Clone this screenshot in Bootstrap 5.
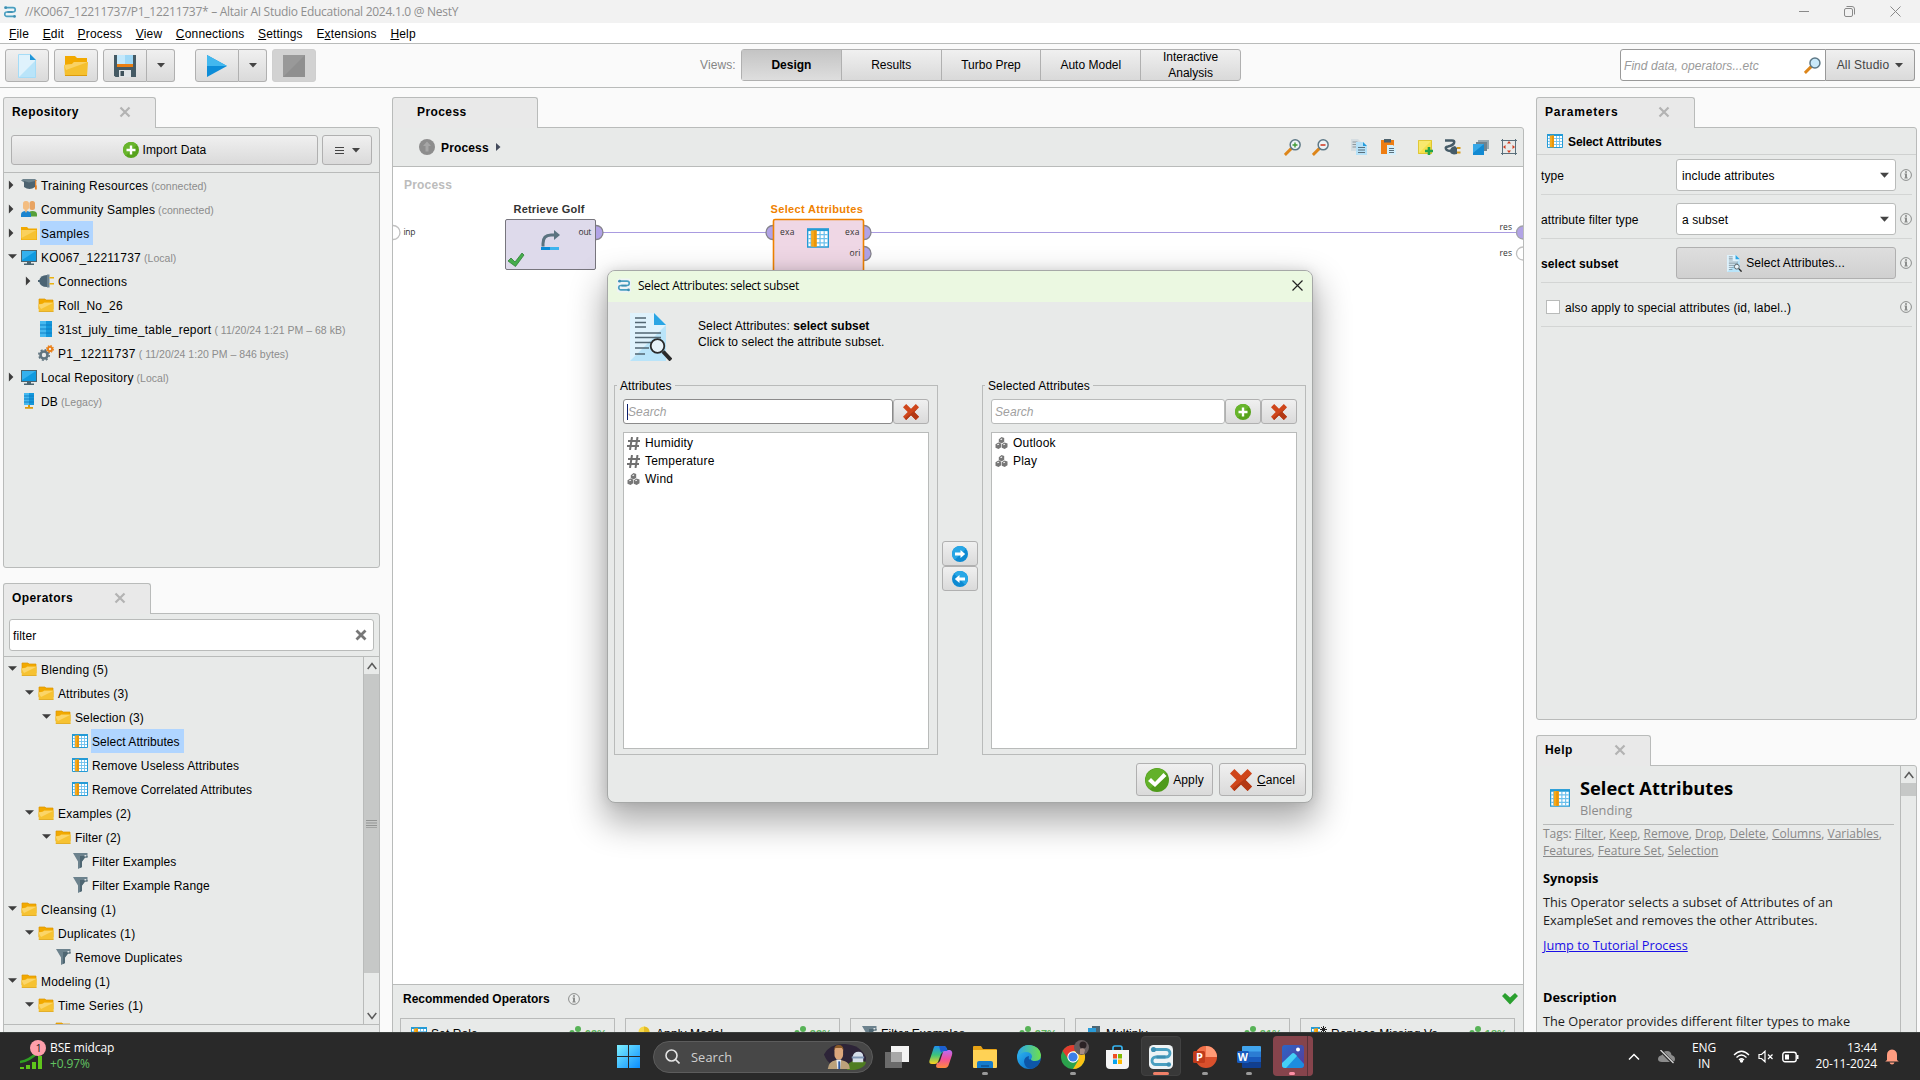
<!DOCTYPE html>
<html lang="en">
<head>
<meta charset="utf-8">
<title>Altair AI Studio</title>
<meta name="viewport" content="width=device-width, initial-scale=1">
<link href="https://cdn.jsdelivr.net/npm/bootstrap@5.3.0/dist/css/bootstrap.min.css" rel="stylesheet">
<style>
:root{--line:#b9bbba;--pane:#e8eae9}
html,body{height:1080px;overflow:hidden}
body{font-family:"Liberation Sans",Arial,sans-serif;font-size:12px;line-height:16px;color:#000;background:#fafafa;width:1920px;letter-spacing:.1px}
svg{display:block;flex:none}
.titlebar{height:23px;background:#f2f2f2;color:#8f8f8f;font-family:"Open Sans",sans-serif;padding:0 19px 0 3px;letter-spacing:-.28px}
.menubar{height:21px;background:#fff;border-bottom:1px solid var(--line);padding:1px 0 0 9px;gap:13.6px;letter-spacing:.17px}
.toolbar{height:44px;border-bottom:1px solid var(--line);padding:5px 5px 0}
.jbtn{display:flex;align-items:center;justify-content:center;border:1px solid #b0b0b0;border-radius:3px;background:linear-gradient(#f0f0f0,#dadada);color:#000}
.tb{height:33px;width:44px}
.tbgap{margin-left:5px}
.tb-off{background:#d2d2d2;border-color:#cfcfcf}
.tbdrop{width:28px;height:33px}
.joinl{border-top-right-radius:0;border-bottom-right-radius:0}
.joinr{border-top-left-radius:0;border-bottom-left-radius:0;border-left:0}
.views{width:500px;height:32px;border:1px solid #b0b0b0;border-radius:3px;background:linear-gradient(#f0f0f0,#d9d9d9);letter-spacing:0}
.views>div{flex:1;display:flex;align-items:center;justify-content:center;text-align:center;border-left:1px solid #b0b0b0}
.views>div:first-child{border-left:0;background:linear-gradient(#c4c4c4,#dedede)}
.finder{width:206px;height:32px;border:1px solid #999;border-radius:3px 0 0 3px;background:#fff;color:#9a9a9a;font-style:italic;padding:1px 4px 0 3px;letter-spacing:.05px}
.scope{width:89px;height:32px;border-color:#999;color:#444;letter-spacing:.2px}
.work{height:944px;padding:9px 3px 0;overflow:hidden}
.tabhead{height:31px;border:1px solid var(--line);border-bottom:0;border-radius:3px 3px 0 0;background:#e9e9e9;font-weight:700;padding:0 24px 2px 8px;letter-spacing:.42px;margin-bottom:-1px;position:relative;z-index:1}
.pane{background:var(--pane);border:1px solid var(--line);border-radius:0 3px 3px 3px}
.tree .trow{display:flex;align-items:center;height:24px}
.trow>svg:first-child{margin:0 4px 0 4px}
.trow>.leafgap{width:17px;flex:none}
.trow span.lbl{margin-left:3px;padding:2px 4px 0 1px;line-height:22px;letter-spacing:.12px;white-space:nowrap}
.trow span.sel{background:#b0d5ff}
.meta{font-size:10.5px;color:#8c8c8c;margin-left:-1px;letter-spacing:.02px;padding-top:2px;white-space:nowrap}
.l1{padding-left:17px}.l2{padding-left:34px}.l3{padding-left:51px}
.jinput{background:#fff;border:1px solid var(--line);border-radius:3px}
.sbar{width:16px;border-left:1px solid var(--line);flex:none}
.thumb{background:#c6c8c7}
.crumb{height:39px;border-bottom:1px solid var(--line);padding:0 6px 0 26px}
.canvas{height:817px;background:#fff}
.reco{width:215px;height:40px;border:1px solid var(--line);padding:7px 7px 0 10px;flex:none}
.reco .pct{color:#5cb35c;font-weight:700;font-size:11px}
.prow{height:44px;border-bottom:1px solid #d3d5d4;margin:0 4px;padding-top:5px}
.prow.first{height:40px;padding-top:1px}
.prow>span:first-child,.prow>b{padding-top:1px}
.prow>svg:last-child{margin-left:4px}
.combo{width:220px;height:32px;padding:1px 6px 0 5px}
.ckbox{width:14px;height:14px;border:1px solid var(--line);margin:0 5px}
.helpbody{font-family:"Open Sans",sans-serif;font-size:12.75px;letter-spacing:0;padding:13px 6px 0 6px;color:#1c1c1c;width:363px}
.helpbody h5{font-size:18.3px;line-height:24px;font-weight:700;margin:-3px 0 0;color:#000}
.tags{color:#888;font-size:12px;line-height:17px;border-top:1px solid var(--line);white-space:nowrap}
.helpbody h6{font-size:12.8px;line-height:18px;font-weight:700;color:#000;margin:0}
.helpbody p{line-height:18px;margin:6px 0 0;white-space:nowrap}
.dlg{position:absolute;left:607px;top:270px;width:706px;height:533px;background:var(--pane);border:1px solid #a6a8a7;border-radius:8px;box-shadow:0 16px 34px 4px rgba(0,0,0,.32),0 0 12px rgba(0,0,0,.1);overflow:hidden;z-index:5}
.dlgbar{height:31px;background:#ebf8e1;font-family:"Open Sans",sans-serif;padding:0 9px 2px 9px;letter-spacing:-.3px}
.grp{position:relative;width:324px;height:370px;border:1px solid var(--line);padding:13px 8px 6px}
.grp>.cap{position:absolute;left:2px;top:-8px;background:var(--pane);padding:0 3px}
.ph{font-style:italic;color:#a0a0a0}
.sq{width:36px;height:25px;margin-left:0}
.lst{background:#fff;border:1px solid var(--line);height:317px;margin-top:8px;padding:1px 3px;letter-spacing:.2px}
.lst>div{display:flex;align-items:center;height:18px;gap:5px}
.tbar{height:48px;background:#292929;color:#fff;font-family:"Open Sans",sans-serif;position:relative;z-index:6;border-top:1px solid #3b3f3d}
.slot{width:44px;height:47px;display:flex;align-items:center;justify-content:center;position:relative;flex:none}
.run::after{content:"";position:absolute;left:19px;bottom:5px;width:6px;height:3px;border-radius:2px;background:#9a9a9a}
.slot.act::before{content:"";position:absolute;left:2px;top:3px;width:40px;height:40px;border-radius:4px;background:#383838;border:1px solid #414141}
.slot.act::after{left:14px;width:16px;background:#f08068}
.slot.att::before{content:"";position:absolute;left:2px;top:3px;width:40px;height:40px;border-radius:4px;background:linear-gradient(90deg,#86444c 34px,#5a3238 34px,#5a3238 35px,#86444c 35px)}
.slot.att::after{left:18px;background:#ff8fa5}
.slot svg{position:relative}
.pill{width:220px;height:32px;border-radius:16px;background:#474747;border:1px solid #5c5c5c;color:#cfcfcf;padding:0 4px 0 11px}
.tray{font-size:12px;line-height:16px;letter-spacing:-.12px}
.lift{padding-bottom:1px}
</style>
</head>
<body>
<svg width="0" height="0" class="position-absolute">
<defs>
<linearGradient id="gb" x1="0" y1="0" x2="1" y2="1"><stop offset="0" stop-color="#7df0ff"/><stop offset="1" stop-color="#0a8cff"/></linearGradient>
<linearGradient id="ge" x1="0" y1="0" x2="1" y2="1"><stop offset="0" stop-color="#35c3f0"/><stop offset=".5" stop-color="#1a8fe0"/><stop offset="1" stop-color="#0c5aa8"/></linearGradient>
<linearGradient id="ge2" x1="0" y1="0" x2="1" y2="0"><stop offset="0" stop-color="#2aa7ee"/><stop offset="1" stop-color="#6fe04a"/></linearGradient>
<linearGradient id="gp" x1="0" y1="0" x2="1" y2="1"><stop offset="0" stop-color="#2a66c8"/><stop offset="1" stop-color="#5a3a98"/></linearGradient>
<linearGradient id="c1" x1="0" y1="0" x2="0" y2="1"><stop offset="0" stop-color="#1f8ff0"/><stop offset=".5" stop-color="#3cc47a"/><stop offset="1" stop-color="#ffd21e"/></linearGradient>
<linearGradient id="c2" x1="0" y1="0" x2="0" y2="1"><stop offset="0" stop-color="#b86cf5"/><stop offset=".5" stop-color="#f0509a"/><stop offset="1" stop-color="#ff8a3c"/></linearGradient>
</defs>
<symbol id="i-logo" viewBox="0 0 16 16"><rect x="0" y="0" width="16" height="16" rx="3" fill="#eef3f5"/><path d="M3 3h8.500a2.500 2.500 0 0 1 0 5H4.500a2.400 2.400 0 0 0 0 5H13" fill="none" stroke="#4a9fc0" stroke-width="1.900"/><circle cx="3" cy="3" r="1.700" fill="#3d8fb2"/><circle cx="13.200" cy="13" r="1.500" fill="#3d8fb2"/><path d="M5 8h6" stroke="#3d8fb2" stroke-width="2"/></symbol>
<symbol id="i-open" viewBox="0 0 16 16"><path d="M1 2h6l1 1h7v9H1z" fill="#f2a900" stroke="#dd9600" stroke-width=".7"/><path d="M.4 7.500 5 6.500l1-1h9.600v9H.8z" fill="#f6c232"/><path d="M.4 7.600 5 6.800l1-1h9.500L3 12z" fill="#fbd568"/><path d="M.8 14.500h14.700" stroke="#dfa410" stroke-width=".8"/></symbol>
<symbol id="i-fold" viewBox="0 0 16 16"><path d="M0 2h6l1.500 1.500H16V15H0z" fill="#f2a900"/><path d="M.5 5h15v9.500H.5z" fill="#f6c232"/><path d="M.5 5h15L.5 13z" fill="#fad15c"/></symbol>
<symbol id="i-mon" viewBox="0 0 16 16"><path d="M0 1h16v12H0z" fill="#4b6470"/><path d="M1 2h14v10H1z" fill="#0f9ae0"/><path d="M1 2h14L1 11z" fill="#35b1ee"/><path d="M6 13h4v1.500h3V16H3v-1.500h3z" fill="#4b6470"/></symbol>
<symbol id="i-cap" viewBox="0 0 16 16"><path d="M0 3.500 2 2h12l2 1.500L12 6H4z" fill="#6e838d"/><path d="M3 4l5 1.500L14 4v6q-5.500 4-11 0z" fill="#4d6370"/><path d="M14.700 3v6" stroke="#e67e22" stroke-width="1.200"/><path d="M14 8.500h1.800v4H14z" fill="#e67e22"/></symbol>
<symbol id="i-ppl" viewBox="0 0 16 16"><rect x="8.500" y="0" width="5.500" height="9" rx="2.500" fill="#e8a462"/><rect x="2" y="0" width="6" height="9" rx="2.700" fill="#f3bd80"/><path d="M7.500 15.500V13q0-3 4-3t4.500 3v2.500z" fill="#57a03a"/><path d="M0 16v-2.500Q0 10 5 10t5 3.500V16z" fill="#1a84cf"/><path d="M3.500 9h3L5 12z" fill="#f3bd80"/></symbol>
<symbol id="i-plug" viewBox="0 0 16 16"><path d="M0 7h2v2H0z" fill="#4d6370"/><path d="M1 8q1-6 8-6v12q-7 0-8-6z" fill="#4b6474"/><path d="M9 1.500h2.500v13H9z" fill="#6e8491"/><path d="M11.500 4H16v1.600h-4.500zM11.500 10H16v1.600h-4.500z" fill="#eab10f"/></symbol>
<symbol id="i-data" viewBox="0 0 16 16"><path d="M2 0h12v16H2z" fill="#1498dc"/><path d="M2 0h6v16H2z" fill="#45b9f0"/><path d="M2 4h12M2 8h12M2 12h12" stroke="#0c7cc0" stroke-width=".9"/></symbol>
<symbol id="i-db" viewBox="0 0 16 16"><path d="M3 0h10v12H3z" fill="#1498dc"/><path d="M3 0h5v12H3z" fill="#45b9f0"/><path d="M3 3h10M3 6h10M3 9h10" stroke="#0c7cc0" stroke-width=".9"/><path d="M7 12h2v2H7zM4 14h8v1.800H4z" fill="#d99a10"/></symbol>
<symbol id="i-gear" viewBox="0 0 16 16"><circle cx="6" cy="10" r="3.500" fill="none" stroke="#60747f" stroke-width="2.600"/><circle cx="6" cy="10" r="5.200" fill="none" stroke="#60747f" stroke-width="1.600" stroke-dasharray="2 2.080"/><circle cx="12" cy="4" r="2.100" fill="none" stroke="#ea7d13" stroke-width="1.800"/><circle cx="12" cy="4" r="3.300" fill="none" stroke="#ea7d13" stroke-width="1.300" stroke-dasharray="1.500 1.090"/></symbol>
<symbol id="i-tbl" viewBox="0 0 16 16"><path d="M.5 1.500h15v13H.5z" fill="#fff" stroke="#249bd6"/><path d="M1 5.500h14M1 8.500h14M1 11.500h14M9.500 3v11M12.500 3v11M3 3v11" stroke="#6cc0ec" stroke-width=".9"/><path d="M0 1h16v2H0z" fill="#249bd6"/><path d="M3 2.500h4v11.800H3z" fill="#f6a91b"/><path d="M5 2.500h2v11.800H5z" fill="#ea960a"/></symbol>
<symbol id="i-fun" viewBox="0 0 16 16"><path d="M1 0h14.500v4.500H13L10 8.500V14L6 16V8.500z" fill="#6c828d"/><path d="M8 3h7.500v1.500H13L10 8.500V14l-2 1z" fill="#4e6672"/><path d="M12.500 2h1.800v1.500h-1.800z" fill="#dfe4e6"/></symbol>
<symbol id="i-plus" viewBox="0 0 16 16"><circle cx="8" cy="8" r="8" fill="#57a31c"/><path d="M0 8a8 8 0 0 1 14-5.300L2.700 14A8 8 0 0 1 0 8z" fill="#68b52c"/><path d="M6.800 3.500h2.400v3.300h3.300v2.400H9.200v3.300H6.800V9.200H3.500V6.800h3.300z" fill="#fff"/></symbol>
<symbol id="i-redx" viewBox="0 0 16 16"><path d="M0 3.200 3.200 0 8 4.700 12.800 0 16 3.200 11.300 8l4.700 4.800-3.200 3.200L8 11.300 3.200 16 0 12.800 4.700 8z" fill="#cf461b"/><path d="M16 3.200 11.300 8l4.700 4.800-3.200 3.200L8 11.300 3.200 16 1.600 14.400z" fill="#b33915"/></symbol>
<symbol id="i-ok" viewBox="0 0 24 24"><circle cx="12" cy="12" r="12" fill="#4f9a1b"/><path d="M.5 12A11.500 11.500 0 0 1 21 5L5 21A11 11 0 0 1 .5 12z" fill="#63b12a"/><path d="M3 13l3-3 4 4L18.500 5l3 3L10 19z" fill="#fff"/></symbol>
<symbol id="i-info" viewBox="0 0 12 12"><circle cx="6" cy="6" r="5.400" fill="#eceeed" stroke="#8b8d8c"/><path d="M5 2.300h2v1.400H5zM4.500 4.600H7v3.900h.7v1H4.400v-1H5V5.600h-.5z" fill="#8b8d8c"/></symbol>
<symbol id="i-x" viewBox="0 0 12 12"><path d="M1.500 1.500l9 9m0-9l-9 9" stroke="#b3b3b3" stroke-width="2.200"/></symbol>
<symbol id="i-dn" viewBox="0 0 10 6"><path d="M0 0h10L5 5.600z" fill="#444"/></symbol>
<symbol id="i-rt" viewBox="0 0 10 10"><path d="M1 0v10l5-5z" fill="#3d3d3d"/></symbol>
<symbol id="i-do" viewBox="0 0 10 10"><path d="M0 2h10L5 7z" fill="#3d3d3d"/></symbol>
<symbol id="i-up" viewBox="0 0 10 8"><path d="M.7 7 5 1.500 9.300 7" fill="none" stroke="#5a5a5a" stroke-width="1.500"/></symbol>
<symbol id="i-mag" viewBox="0 0 16 16"><path d="M.8 15 7 8.800" stroke="#dd861a" stroke-width="2.800"/><circle cx="10.300" cy="5.700" r="4.700" fill="#c9e9fa" stroke="#5d7886" stroke-width="1.400"/></symbol>
<symbol id="i-zoom" viewBox="0 0 16 16"><path d="M.8 15 7 8.800" stroke="#dd861a" stroke-width="2.800"/><circle cx="10.500" cy="5.500" r="4.700" fill="#edf4f7" stroke="#5d7886" stroke-width="1.400"/></symbol>
<symbol id="i-docmag" viewBox="0 0 42 48"><path d="M0 0h24l12 12v36H0z" fill="#b9e4f9"/><path d="M0 0h24l12 12L0 48z" fill="#dff2fc"/><path d="M24 0v12h12z" fill="#2aa5e4"/><path d="M5 5h11M5 9.500h11M5 14h11M5 20h26M5 24.500h26M5 29.500h16M5 35h14M5 41h10" stroke="#526672" stroke-width="1.500"/><circle cx="27.500" cy="33" r="6.800" fill="#eef5f8" fill-opacity=".85" stroke="#2a2a2a" stroke-width="1.800"/><path d="M33 38.500l8 8.500" stroke="#2a2a2a" stroke-width="4"/></symbol>
<symbol id="i-hash" viewBox="0 0 13 13"><path d="M5 0 3 13M10.500 0l-2 13M1 4h12M0 9h12" stroke="#707070" stroke-width="2"/></symbol>
<symbol id="i-nom" viewBox="0 0 12 12"><path d="M3.300 2.300 6 0l2.700 1v4L6.200 6.200 3.300 5.200z" fill="#777"/><path d="M0 7.300 2.800 5.500l2.900 1v3.700L3 12 0 10.800zM6.300 7.300 9 5.500l3 1v3.700L9.200 12l-2.900-1.200z" fill="#777"/><path d="M4.500 2.800 6 1.600l1 .4-1.200 1zM1.300 7.800 3 6.800l.8.400-1.400 1zM7.400 7.800 9 6.800l.8.400-1.400 1z" fill="#fff"/></symbol>
<symbol id="i-arr" viewBox="0 0 16 16"><circle cx="8" cy="8" r="8" fill="#0d8ad2"/><path d="M0 8a8 8 0 0 1 14-5.300L2.700 14A8 8 0 0 1 0 8z" fill="#28a7e6"/><path d="M3 6.500h5.500V4l4.700 4-4.700 4V9.500H3z" fill="#fff"/></symbol>
<symbol id="i-dots" viewBox="0 0 12 12"><circle cx="9" cy="3" r="3" fill="#57b357"/><circle cx="3" cy="6.500" r="2.600" fill="#57b357"/><path d="M0 10h6v2H0zM6 8q3-3 6 0v4H6z" fill="#57b357"/></symbol>
</svg>

<div class="titlebar d-flex align-items-center">
  <svg width="14" height="14"><use href="#i-logo"/></svg>
  <span class="ms-2">//KO067_12211737/P1_12211737* – Altair AI Studio Educational 2024.1.0 @ NestY</span>
  <div class="ms-auto d-flex align-items-center lift" style="gap:35px">
    <svg width="10" height="10"><path d="M0 5.500h10" stroke="#8a8a8a"/></svg>
    <svg width="11" height="11" fill="none" stroke="#8a8a8a"><rect x=".5" y="2.500" width="8" height="8" rx="1.500"/><path d="M2.500.5H8q2.500 0 2.500 2.500v5.500"/></svg>
    <svg width="11" height="11"><path d="M.5.5l10 10m0-10l-10 10" stroke="#8a8a8a"/></svg>
  </div>
</div>
<div class="menubar d-flex align-items-center">
  <span><u>F</u>ile</span><span><u>E</u>dit</span><span><u>P</u>rocess</span><span><u>V</u>iew</span><span><u>C</u>onnections</span><span><u>S</u>ettings</span><span>E<u>x</u>tensions</span><span><u>H</u>elp</span>
</div>
<div class="toolbar d-flex align-items-start">
  <div class="jbtn tb"><svg width="18" height="24"><path d="M0 0h12l6 6v18H0z" fill="#b9e4f9"/><path d="M0 0h12l6 6L0 24z" fill="#dff2fc"/><path d="M12 0l6 6h-6z" fill="#2196d8"/><path d="M.5.5H12M.5.5v23h17V6" fill="none" stroke="#a5dcf7"/></svg></div>
  <div class="jbtn tb tbgap"><svg width="24" height="22"><path d="M1 1h10l2 2h10v17H1z" fill="#f2a900"/><path d="M0 10l8-1 2-2h14l-1 14H1z" fill="#f5c02e"/><path d="M0 10l8-1 2-2h14L2 15z" fill="#fad263"/><path d="M1 20.500h22" stroke="#dc9b0c"/></svg></div>
  <div class="d-flex tbgap">
    <div class="jbtn tb joinl"><svg width="22" height="22"><path d="M0 0h22v22H1.500L0 20.500z" fill="#455a64"/><path d="M3 0h16v9H3z" fill="#c3e8fb"/><path d="M11 0h8v9h-8z" fill="#9fd8f6"/><path d="M3 9h16v3H3z" fill="#ea7f13"/><path d="M5 15h12v7H5z" fill="#dfe4e7"/><path d="M6.500 16H10v5H6.500z" fill="#3d515b"/></svg></div>
    <div class="jbtn joinr tbdrop"><svg width="8" height="5"><use href="#i-dn"/></svg></div>
  </div>
  <div class="d-flex" style="margin-left:20px">
    <div class="jbtn tb joinl"><svg width="20" height="22"><path d="M0 0l20 11L0 22z" fill="#0d8dd8"/><path d="M0 0l20 11H0z" fill="#43b8ee"/></svg></div>
    <div class="jbtn joinr tbdrop"><svg width="8" height="5"><use href="#i-dn"/></svg></div>
  </div>
  <div class="jbtn tb tb-off tbgap"><svg width="22" height="22"><path d="M0 0h22v22H0z" fill="#8f8f8f"/><path d="M0 0h22L0 22z" fill="#999"/></svg></div>
  <div class="d-flex align-items-center" style="margin-left:384px"><span style="color:#858585;width:41px">Views:</span>
    <div class="views d-flex"><div class="fw-bold">Design</div><div>Results</div><div>Turbo Prep</div><div>Auto Model</div><div>Interactive<br>Analysis</div></div>
  </div>
  <div class="d-flex ms-auto">
    <div class="finder d-flex align-items-center justify-content-between"><span>Find data, operators...etc</span><svg width="17" height="17"><use href="#i-mag"/></svg></div>
    <div class="jbtn scope joinr">All Studio<svg style="margin-left:6px" width="8" height="5"><use href="#i-dn"/></svg></div>
  </div>
</div>

<div class="work d-flex">
  <!-- Left column -->
  <div class="flex-shrink-0" style="width:377px">
    <div class="tabhead d-flex align-items-center justify-content-between" style="width:153px">Repository<svg width="12" height="12"><use href="#i-x"/></svg></div>
    <div class="pane" style="height:441px">
      <div class="d-flex" style="padding:7px 7px 0;gap:4px;height:45px;border-bottom:1px solid var(--line)">
        <div class="jbtn flex-fill" style="height:30px;gap:4px"><svg width="16" height="16"><use href="#i-plus"/></svg>Import Data</div>
        <div class="jbtn" style="width:50px;height:30px;gap:8px"><svg width="9" height="9"><path d="M0 1.500h9M0 4.500h9M0 7.500h9" stroke="#444"/></svg><svg width="8" height="5"><use href="#i-dn"/></svg></div>
      </div>
      <div class="tree">
        <div class="trow"><svg width="9" height="10"><use href="#i-rt"/></svg><svg width="16" height="16"><use href="#i-cap"/></svg><span class="lbl" style="letter-spacing:.2px">Training Resources</span><span class="meta">(connected)</span></div>
        <div class="trow"><svg width="9" height="10"><use href="#i-rt"/></svg><svg width="16" height="16"><use href="#i-ppl"/></svg><span class="lbl" style="letter-spacing:.2px">Community Samples</span><span class="meta">(connected)</span></div>
        <div class="trow"><svg width="9" height="10"><use href="#i-rt"/></svg><svg width="16" height="16"><use href="#i-fold"/></svg><span class="lbl sel" style="letter-spacing:.25px">Samples</span></div>
        <div class="trow"><svg width="9" height="10"><use href="#i-do"/></svg><svg width="16" height="16"><use href="#i-mon"/></svg><span class="lbl" style="letter-spacing:.25px">KO067_12211737</span><span class="meta">(Local)</span></div>
        <div class="trow l1"><svg width="9" height="10"><use href="#i-rt"/></svg><svg width="16" height="16"><use href="#i-plug"/></svg><span class="lbl" style="letter-spacing:.22px">Connections</span></div>
        <div class="trow l1"><i class="leafgap"></i><svg width="16" height="16"><use href="#i-open"/></svg><span class="lbl" style="letter-spacing:.22px">Roll_No_26</span></div>
        <div class="trow l1"><i class="leafgap"></i><svg width="16" height="16"><use href="#i-data"/></svg><span class="lbl" style="letter-spacing:.22px">31st_july_time_table_report</span><span class="meta">( 11/20/24 1:21 PM – 68 kB)</span></div>
        <div class="trow l1"><i class="leafgap"></i><svg width="16" height="16"><use href="#i-gear"/></svg><span class="lbl" style="letter-spacing:.35px">P1_12211737</span><span class="meta">( 11/20/24 1:20 PM – 846 bytes)</span></div>
        <div class="trow"><svg width="9" height="10"><use href="#i-rt"/></svg><svg width="16" height="16"><use href="#i-mon"/></svg><span class="lbl" style="letter-spacing:.2px">Local Repository</span><span class="meta">(Local)</span></div>
        <div class="trow"><i class="leafgap"></i><svg width="16" height="16"><use href="#i-db"/></svg><span class="lbl">DB</span><span class="meta">(Legacy)</span></div>
      </div>
    </div>
    <div class="tabhead d-flex align-items-center justify-content-between" style="width:148px;margin-top:15px">Operators<svg width="12" height="12"><use href="#i-x"/></svg></div>
    <div class="pane" style="height:440px">
      <div style="height:43px;padding:5px 5px 0 5px;border-bottom:1px solid var(--line)">
        <div class="jinput d-flex align-items-center justify-content-between" style="height:32px;padding:0 6px 0 3px"><span style="padding-top:1px">filter</span><svg width="12" height="12"><path d="M1.500 1.500l9 9m0-9l-9 9" stroke="#777" stroke-width="2.800"/></svg></div>
      </div>
      <div class="d-flex" style="height:368px;border-bottom:1px solid var(--line)">
        <div class="tree flex-fill overflow-hidden">
          <div class="trow"><svg width="9" height="10"><use href="#i-do"/></svg><svg width="16" height="16"><use href="#i-open"/></svg><span class="lbl" style="letter-spacing:.2px">Blending (5)</span></div>
          <div class="trow l1"><svg width="9" height="10"><use href="#i-do"/></svg><svg width="16" height="16"><use href="#i-open"/></svg><span class="lbl">Attributes (3)</span></div>
          <div class="trow l2"><svg width="9" height="10"><use href="#i-do"/></svg><svg width="16" height="16"><use href="#i-open"/></svg><span class="lbl">Selection (3)</span></div>
          <div class="trow l3"><i class="leafgap"></i><svg width="16" height="16"><use href="#i-tbl"/></svg><span class="lbl sel" style="letter-spacing:.05px">Select Attributes</span></div>
          <div class="trow l3"><i class="leafgap"></i><svg width="16" height="16"><use href="#i-tbl"/></svg><span class="lbl">Remove Useless Attributes</span></div>
          <div class="trow l3"><i class="leafgap"></i><svg width="16" height="16"><use href="#i-tbl"/></svg><span class="lbl" style="letter-spacing:.1px">Remove Correlated Attributes</span></div>
          <div class="trow l1"><svg width="9" height="10"><use href="#i-do"/></svg><svg width="16" height="16"><use href="#i-open"/></svg><span class="lbl" style="letter-spacing:.2px">Examples (2)</span></div>
          <div class="trow l2"><svg width="9" height="10"><use href="#i-do"/></svg><svg width="16" height="16"><use href="#i-open"/></svg><span class="lbl">Filter (2)</span></div>
          <div class="trow l3"><i class="leafgap"></i><svg width="16" height="16"><use href="#i-fun"/></svg><span class="lbl">Filter Examples</span></div>
          <div class="trow l3"><i class="leafgap"></i><svg width="16" height="16"><use href="#i-fun"/></svg><span class="lbl">Filter Example Range</span></div>
          <div class="trow"><svg width="9" height="10"><use href="#i-do"/></svg><svg width="16" height="16"><use href="#i-open"/></svg><span class="lbl" style="letter-spacing:.3px">Cleansing (1)</span></div>
          <div class="trow l1"><svg width="9" height="10"><use href="#i-do"/></svg><svg width="16" height="16"><use href="#i-open"/></svg><span class="lbl" style="letter-spacing:.25px">Duplicates (1)</span></div>
          <div class="trow l2"><i class="leafgap"></i><svg width="16" height="16"><use href="#i-fun"/></svg><span class="lbl" style="letter-spacing:.2px">Remove Duplicates</span></div>
          <div class="trow"><svg width="9" height="10"><use href="#i-do"/></svg><svg width="16" height="16"><use href="#i-open"/></svg><span class="lbl" style="letter-spacing:.2px">Modeling (1)</span></div>
          <div class="trow l1"><svg width="9" height="10"><use href="#i-do"/></svg><svg width="16" height="16"><use href="#i-open"/></svg><span class="lbl" style="letter-spacing:.25px">Time Series (1)</span></div>
          <div class="trow l2"><i class="leafgap"></i><svg width="16" height="16"><use href="#i-open"/></svg></div>
        </div>
        <div class="sbar d-flex flex-column align-items-center">
          <div style="height:17px;padding-top:5px"><svg width="10" height="8"><use href="#i-up"/></svg></div>
          <div class="thumb w-100 d-flex align-items-center justify-content-center" style="height:299px"><svg width="11" height="8"><path d="M0 .5h11M0 3h11M0 5.500h11M0 7.800h11" stroke="#939594"/></svg></div>
          <div class="mt-auto pb-1"><svg width="10" height="8" style="transform:scaleY(-1)"><use href="#i-up"/></svg></div>
        </div>
      </div>
    </div>
  </div>

  <!-- Process editor -->
  <div class="flex-shrink-0" style="width:1132px;margin-left:12px">
    <div class="tabhead d-flex align-items-center" style="width:146px;padding-left:24px">Process</div>
    <div class="pane" style="height:940px">
      <div class="crumb d-flex align-items-center">
        <svg width="16" height="16"><circle cx="8" cy="8" r="8" fill="#8d8d8d"/><path d="M8 2.500l4 4.500H9.500v5.500h-3V7H4z" fill="#a6a6a6"/></svg>
        <b style="letter-spacing:.15px;padding:1px 0 0 6px">Process</b>
        <svg style="margin-left:7px" width="5" height="8"><path d="M0 0v8l4.500-4z" fill="#444b5c"/></svg>
        <div class="ms-auto d-flex align-items-center">
          <svg width="17" height="17"><use href="#i-zoom"/><path d="M11 3.500v5M8.500 6h5" stroke="#3f9a35" stroke-width="1.400"/></svg>
          <svg width="17" height="17" style="margin-left:11px"><use href="#i-zoom"/><path d="M8.500 6h5" stroke="#d0402a" stroke-width="1.600"/></svg>
          <svg width="17" height="16" style="margin-left:22px"><path d="M0 0h7l3 3v9H0z" fill="#d5dde1"/><path d="M1.500 3h5M1.500 5.500h6M1.500 8h6" stroke="#8a979e"/><path d="M5 3h7l4 4v9H5z" fill="#b5e1f8"/><path d="M12 3l4 4h-4z" fill="#269cdc"/><path d="M7 8.500h7M7 11h7M7 13.500h7" stroke="#5a6f7b"/></svg>
          <svg width="15" height="16" style="margin-left:13px"><path d="M0 1h13v14H0z" fill="#ee7d12"/><path d="M3 0h7v3.500H3z" fill="#4c616c"/><path d="M6 6h6l3 3v7H6z" fill="#d3effc"/><path d="M8 9.500h5M8 11.500h5M8 13.500h5" stroke="#5a6f7b"/></svg>
          <svg width="16" height="16" style="margin-left:22px"><path d="M0 1h14v14H0z" fill="#f5e04a"/><path d="M0 1h14L0 15z" fill="#f9e96e"/><path d="M.5 1.500h13v13H.5z" fill="none" stroke="#d9bf2b" stroke-width=".8"/><path d="M11 8v8M7 12h8" stroke="#22a447" stroke-width="2.600"/></svg>
          <svg width="17" height="16" style="margin-left:10px"><path d="M1 1.500h7q3 0 2 2.500T4 7.500Q1 8 2 10t5 2" fill="none" stroke="#465c68" stroke-width="2.500"/><path d="M6 12q0-4 5-5l2 2v6l-3 .5Q6 15 6 12z" fill="#465c68"/><path d="M13 9h3.500M13 13.500h3.500" stroke="#d79a18" stroke-width="1.800"/></svg>
          <svg width="16" height="15" style="margin-left:12px"><path d="M5 0h11v9H5z" fill="#99a8b0"/><path d="M3 2h11v9H3z" fill="#6f838e"/><path d="M0 4h11v11H0z" fill="#128ad2"/><path d="M0 4h11L0 13z" fill="#36a8e8"/></svg>
          <svg width="16" height="16" style="margin-left:12px"><path d="M1.500 0v16M14.500 0v16M0 1.500h16M0 14.500h16" stroke="#5a6f7b"/><path d="M8 2l2 2.500H6zM8 14l2-2.500H6zM2 8l2.500-2v4zM14 8l-2.500-2v4z" fill="#cf3b1e"/></svg>
        </div>
      </div>
      <svg class="canvas" width="1130" height="817" viewBox="393 167 1130 817">
        <text x="404" y="188.500" font-size="12" font-weight="700" fill="#bcbcbc" textLength="48">Process</text>
        <g font-family="Liberation Sans" font-size="11" font-weight="700">
          <text x="513.500" y="213" fill="#333" textLength="71">Retrieve Golf</text>
          <text x="770.500" y="213" fill="#ef8200" textLength="92.500">Select Attributes</text>
        </g>
        <path d="M603 232.500h163M870 232.500h647" stroke="#a99be0" stroke-width="1.200"/>
        <g stroke="#85838c" stroke-width="1.300">
          <circle cx="393" cy="232.500" r="7" fill="#fff" stroke="#c0c0c0"/>
          <circle cx="596" cy="232.500" r="7" fill="#b1a3e6"/>
          <circle cx="773" cy="232.500" r="7" fill="#b1a3e6"/>
          <circle cx="864" cy="232.500" r="7" fill="#b1a3e6"/>
          <circle cx="864" cy="253.500" r="7" fill="#b1a3e6"/>
          <circle cx="1523" cy="232.500" r="6.500" fill="#b1a3e6" stroke="#a0a0a8"/>
          <circle cx="1523" cy="253.500" r="6.500" fill="#fff" stroke="#c0c0c0"/>
        </g>
        <rect x="505.500" y="219.500" width="90" height="50" rx="1.500" fill="#dedaeb" stroke="#77757d"/>
        <rect x="773.500" y="219.500" width="90" height="60" rx="1.500" fill="#efd7e5" stroke="#ef8200" stroke-width="1.600"/>
        <g font-family="Open Sans" font-size="8.500" fill="#333">
          <text x="403.500" y="235" textLength="12">inp</text><text x="578.500" y="235" textLength="13">out</text>
          <text x="780" y="235" textLength="14.500">exa</text><text x="845" y="235" textLength="14.500">exa</text><text x="849.500" y="256">ori</text>
          <text x="1499.500" y="230">res</text><text x="1499.500" y="256">res</text>
        </g>
        <path d="M543 246.500v-3q0-8.500 8-8.500h5" fill="none" stroke="#5b7380" stroke-width="3"/><path d="M554 230l6 5-6 5z" fill="#5b7380"/><path d="M541 247h9v3h-9z" fill="#0c8bd6"/><path d="M550 247h9v3h-9z" fill="#3fb4ee"/>
        <path d="M508 261l3-3 4 4 7-9 2 2-8.500 11.500z" fill="#46ad4c" stroke="#2f8037" stroke-width=".8"/>
        <use href="#i-tbl" x="807" y="226" width="22" height="24"/>
      </svg>
      <div style="border-top:1px solid var(--line);height:100px">
        <div class="d-flex align-items-center" style="height:33px;padding:0 5px 6px 10px"><b style="letter-spacing:0">Recommended Operators</b><svg width="12" height="12" style="margin-left:18px"><use href="#i-info"/></svg>
          <svg class="ms-auto" width="16" height="12"><path d="M0 3l3-3 5 4.500L13 0l3 3-8 8.500z" fill="#2aa02f"/></svg></div>
        <div class="d-flex" style="padding-left:7px;gap:10px">
          <div class="reco d-flex"><svg width="16" height="16"><use href="#i-tbl"/></svg><span class="ms-1">Set Role</span><svg class="ms-auto" width="12" height="12"><use href="#i-dots"/></svg><span class="pct ms-1">62%</span></div>
          <div class="reco d-flex"><svg width="16" height="16"><circle cx="8" cy="6" r="5.500" fill="#f7d94c"/><path d="M8 .5a5.500 5.500 0 0 1 0 11z" fill="#e5bd25"/></svg><span class="ms-1">Apply Model</span><svg class="ms-auto" width="12" height="12"><use href="#i-dots"/></svg><span class="pct ms-1">33%</span></div>
          <div class="reco d-flex"><svg width="16" height="16"><use href="#i-fun"/></svg><span class="ms-1">Filter Examples</span><svg class="ms-auto" width="12" height="12"><use href="#i-dots"/></svg><span class="pct ms-1">27%</span></div>
          <div class="reco d-flex"><svg width="16" height="16"><path d="M6 0h8v8H6z" fill="#4d6674"/><path d="M2 2h8v8H2z" fill="#2a9bd8"/></svg><span class="ms-1">Multiply</span><svg class="ms-auto" width="12" height="12"><use href="#i-dots"/></svg><span class="pct ms-1">21%</span></div>
          <div class="reco d-flex"><svg width="16" height="16"><use href="#i-tbl"/><path d="M9 0h7v7H9z" fill="#e8eae9"/><path d="M12.500 0v7M9 3.500h7M10 1l5 5M15 1l-5 5" stroke="#222"/></svg><span class="ms-1">Replace Missing Va...</span><svg class="ms-auto" width="12" height="12"><use href="#i-dots"/></svg><span class="pct ms-1">18%</span></div>
        </div>
      </div>
    </div>
  </div>

  <!-- Right column -->
  <div class="flex-shrink-0" style="width:381px;margin-left:12px">
    <div class="tabhead d-flex align-items-center justify-content-between" style="width:159px;letter-spacing:.8px">Parameters<svg width="12" height="12"><use href="#i-x"/></svg></div>
    <div class="pane" style="height:593px">
      <div class="d-flex align-items-center" style="height:27px;padding-left:10px;border-bottom:1px solid #cfd1d0"><svg width="16" height="16"><use href="#i-tbl"/></svg><b style="letter-spacing:-.08px;padding:1px 0 0 5px">Select Attributes</b></div>
      <div class="prow first d-flex align-items-center"><span>type</span><div class="jinput combo ms-auto d-flex align-items-center justify-content-between">include attributes<svg width="9" height="7"><use href="#i-dn"/></svg></div><svg width="12" height="12"><use href="#i-info"/></svg></div>
      <div class="prow d-flex align-items-center"><span>attribute filter type</span><div class="jinput combo ms-auto d-flex align-items-center justify-content-between">a subset<svg width="9" height="7"><use href="#i-dn"/></svg></div><svg width="12" height="12"><use href="#i-info"/></svg></div>
      <div class="prow d-flex align-items-center"><b>select subset</b><div class="jbtn combo ms-auto" style="padding:0;background:linear-gradient(#dedede,#d0d0d0)"><svg width="15" height="17" class="me-1"><use href="#i-docmag"/></svg>Select Attributes...</div><svg width="12" height="12"><use href="#i-info"/></svg></div>
      <div class="prow d-flex align-items-center"><i class="bg-white ckbox"></i><span style="letter-spacing:.13px;padding-top:1px">also apply to special attributes (id, label..)</span><svg class="ms-auto" width="12" height="12"><use href="#i-info"/></svg></div>
    </div>
    <div class="tabhead d-flex align-items-center justify-content-between" style="width:115px;margin-top:15px">Help<svg width="12" height="12"><use href="#i-x"/></svg></div>
    <div class="pane d-flex" style="height:300px">
      <div class="helpbody">
        <div class="d-flex" style="height:45px;padding-left:7px"><svg style="margin-top:8px" width="20" height="22"><use href="#i-tbl" /></svg>
          <div style="padding-left:10px"><h5>Select Attributes</h5><div style="color:#8c8c8c;line-height:20px">Blending</div></div></div>
        <div class="tags">Tags: <u>Filter</u>, <u>Keep</u>, <u>Remove</u>, <u>Drop</u>, <u>Delete</u>, <u>Columns</u>, <u>Variables</u>,<br><u>Features</u>, <u>Feature Set</u>, <u>Selection</u></div>
        <h6 style="margin-top:10px">Synopsis</h6>
        <p>This Operator selects a subset of Attributes of an<br>ExampleSet and removes the other Attributes.</p>
        <p style="margin-top:7px"><u style="color:#1a0fe6">Jump to Tutorial Process</u></p>
        <h6 style="margin-top:34px">Description</h6>
        <p>The Operator provides different filter types to make</p>
      </div>
      <div class="sbar d-flex flex-column align-items-center"><div style="height:17px;padding-top:5px"><svg width="10" height="8"><use href="#i-up"/></svg></div><div class="thumb w-100" style="height:13px"></div></div>
    </div>
  </div>
</div>

<!-- Dialog window -->
<div class="dlg">
  <div class="dlgbar d-flex align-items-center"><svg width="14" height="15"><use href="#i-logo"/></svg><span style="margin-left:7px">Select Attributes: select subset</span><svg class="ms-auto" width="11" height="11"><path d="M.5.5l10 10m0-10l-10 10" stroke="#222" stroke-width="1.200"/></svg></div>
  <div class="d-flex" style="height:83px;padding:11px 0 0 22px"><svg width="42" height="48"><use href="#i-docmag"/></svg><div style="padding-left:26px;padding-top:5px;letter-spacing:.1px">Select Attributes: <b style="letter-spacing:0">select subset</b><br>Click to select the attribute subset.</div></div>
  <div class="d-flex justify-content-between" style="padding:0 6px">
    <div class="grp"><span class="cap">Attributes</span>
      <div class="d-flex"><div class="jinput flex-fill d-flex align-items-center" style="border-color:#8b8b8b;padding-left:3px"><i style="width:1px;height:16px;background:#0b1f6b"></i><span class="ph">Search</span></div><div class="jbtn sq"><svg width="16" height="16"><use href="#i-redx"/></svg></div></div>
      <div class="lst"><div><svg width="13" height="13"><use href="#i-hash"/></svg>Humidity</div><div><svg width="13" height="13"><use href="#i-hash"/></svg>Temperature</div><div><svg width="13" height="12"><use href="#i-nom"/></svg>Wind</div></div>
    </div>
    <div style="width:36px;padding-top:156px"><div class="jbtn w-100" style="height:25px"><svg width="16" height="16"><use href="#i-arr"/></svg></div><div class="jbtn w-100" style="height:25px"><svg width="16" height="16" style="transform:scaleX(-1)"><use href="#i-arr"/></svg></div></div>
    <div class="grp"><span class="cap">Selected Attributes</span>
      <div class="d-flex"><div class="jinput flex-fill d-flex align-items-center ph" style="padding-left:3px">Search</div><div class="jbtn sq"><svg width="16" height="16"><use href="#i-plus"/></svg></div><div class="jbtn sq"><svg width="16" height="16"><use href="#i-redx"/></svg></div></div>
      <div class="lst"><div><svg width="13" height="12"><use href="#i-nom"/></svg>Outlook</div><div><svg width="13" height="12"><use href="#i-nom"/></svg>Play</div></div>
    </div>
  </div>
  <div class="d-flex justify-content-end" style="padding:8px 6px 0;gap:6px">
    <div class="jbtn" style="width:77px;height:33px;gap:4px"><svg width="24" height="24"><use href="#i-ok"/></svg>Apply</div>
    <div class="jbtn" style="width:87px;height:33px;gap:5px"><svg width="22" height="22"><use href="#i-redx"/></svg><span><u>C</u>ancel</span></div>
  </div>
</div>

<!-- Taskbar -->
<div class="tbar d-flex align-items-center">
  <div class="d-flex align-items-center tray flex-shrink-0 lift" style="width:617px;padding-left:20px">
    <svg width="26" height="32"><path d="M0 22q9-1 18-10" fill="none" stroke="#2f9e22" stroke-width="2.500"/><path d="M0 27h4v2H0zM6 25h4v4H6zM12 22h4v7h-4zM18 16h4v13h-4z" fill="#5fc51c"/><circle cx="18" cy="8" r="8" fill="#ff9fab"/><text x="15.500" y="12" font-size="11" fill="#222">1</text></svg>
    <div class="ms-1" style="line-height:16px">BSE midcap<br><span style="color:#62c462">+0.97%</span></div>
  </div>
  <svg width="23" height="23" fill="url(#gb)"><path d="M0 0h11v11H0zM12 0h11v11H12zM0 12h11v11H0zM12 12h11v11H12z"/></svg>
  <div class="pill d-flex align-items-center flex-shrink-0" style="margin:0 2px 0 13px"><svg width="15" height="15"><circle cx="6.500" cy="6.500" r="5.500" fill="none" stroke="#e4e4e4" stroke-width="1.600"/><path d="M10.500 10.500l4 4" stroke="#e4e4e4" stroke-width="1.600"/></svg><span style="margin-left:11px;font-size:12.800px">Search</span>
    <svg class="ms-auto" width="46" height="28" viewBox="0 2 48 29"><path d="M2 14Q8 2 24 3t22 14q0 10-16 12Q8 30 2 14z" fill="#2d2438"/><path d="M28 23q8-6 18-1-1 6-12 8h-8z" fill="#4f7d22"/><path d="M6 29q1-8 8-9l4-1 6 2q5 2 5 8z" fill="#bba17a"/><path d="M15 19h5l-1 10h-3z" fill="#e8eef5"/><path d="M17 21h2v8h-2z" fill="#345ca0"/><rect x="13" y="5" width="9" height="14" rx="4.500" fill="#dca67c"/><path d="M12.500 10q0-6 5-6t5 6l-1.500-3h-7z" fill="#8a5a28"/><path d="M32 22v-6q1-5 6-5t5 5v6z" fill="#d5deea"/><path d="M31 16h13v2H31z" fill="#7f95b4"/></svg></div>
  <div class="slot"><svg width="24" height="24"><path d="M6 1h18v16H6z" fill="#f3f3f3"/><path d="M0 7h17v16H0z" fill="#6b6b6b"/><path d="M6 7h11v10H6z" fill="#a8a8a8"/></svg></div>
  <div class="slot"><svg width="24" height="24"><path d="M6 1h9q2 0 3 3l1 3h-4q-2 0-3 2l-3 8q-1 2-3 2H3q-4 0-2-5l3-9q1-4 2-4z" fill="url(#c1)"/><path d="M18 23H9q-2 0-2-2l1-3q2 0 3-2l3-9q1-2 3-2h4q3 1 2 5l-3 9q-1 4-4 4z" fill="url(#c2)"/><path d="M10 1h5q2 0 3 3l.5 2h-3Q13 6 12 8z" fill="#1c5fd0"/></svg></div>
  <div class="slot run"><svg width="24" height="24"><path d="M0 2q0-1 1-1h7l2 3h13q1 0 1 1v17H0z" fill="#e8a315"/><path d="M0 5h24v17q0 1-1 1H1q-1 0-1-1z" fill="#ffd255"/><path d="M4 23v-5q0-2 2-2h12q2 0 2 2v5z" fill="#157bcb"/><path d="M8 20h8v2H8z" fill="#0d5ca3"/></svg></div>
  <div class="slot"><svg width="24" height="24"><circle cx="12" cy="12" r="12" fill="url(#ge)"/><path d="M1 8Q4 0 12 0q11 1 12 10 0 6-6 6-4 0-4-2 1-1 1-3-1-4-6-4-5 0-8 5z" fill="url(#ge2)"/><path d="M14 14q-1 2 4 2 4 0 5.500-1.500Q22 22 14 24q-6-1-7-7 0-5 5-6-1 5 2 3z" fill="#0d56a8"/></svg></div>
  <div class="slot run"><svg width="24" height="24" overflow="visible"><circle cx="12" cy="12" r="12" fill="#2ba24c"/><path d="M1.600 6A12 12 0 0 1 22.400 6H12L8 15z" fill="#e33b2e"/><path d="M22.400 6A12 12 0 0 1 12 24l5.500-9L12 6z" fill="#fbc116"/><circle cx="12" cy="12" r="5.700" fill="#fff"/><circle cx="12" cy="12" r="4.600" fill="#3d7fe8"/><circle cx="20.500" cy="2.500" r="7.500" fill="#655c5e"/><circle cx="22" cy="0" r="3.500" fill="#2b2225"/><path d="M19 4q4-2 5 1l-1 4h-4z" fill="#a98e86"/></svg></div>
  <div class="slot"><svg width="23" height="24"><path d="M7 6V3q0-2 2-2h5q2 0 2 2v3" fill="none" stroke="#36b4f0" stroke-width="1.700"/><path d="M0 5h23v15q0 4-4 4H4q-4 0-4-4z" fill="#f5f5f5"/><path d="M7 9h4v4.500H7z" fill="#f04f23"/><path d="M12 9h4v4.500h-4z" fill="#80bb01"/><path d="M7 14.500h4V19H7z" fill="#05a4f0"/><path d="M12 14.500h4V19h-4z" fill="#ffb900"/></svg></div>
  <div class="slot run act"><svg width="24" height="24"><use href="#i-logo"/></svg></div>
  <div class="slot run"><svg width="24" height="24"><circle cx="13" cy="12" r="11" fill="#d9502c"/><path d="M13 1a11 11 0 0 1 11 11H13z" fill="#ff9a76"/><path d="M13 1a11 11 0 0 0-11 11h11z" fill="#f07049"/><rect x="0" y="6" width="12" height="12" rx="1.500" fill="#c13b1b"/><text x="3" y="16" font-size="11" font-weight="700" fill="#fff" font-family="Open Sans">P</text></svg></div>
  <div class="slot run"><svg width="24" height="24"><path d="M6 1h17q1 0 1 1v5H5V2q0-1 1-1z" fill="#41a5ee"/><path d="M5 6.500h19V12H5z" fill="#2b7cd3"/><path d="M5 12h19v5.500H5z" fill="#185abd"/><path d="M5 17.500h19V22q0 1-1 1H6q-1 0-1-1z" fill="#103f91"/><rect x="0" y="6" width="12" height="12" rx="1.500" fill="#185abd"/><text x=".8" y="16" font-size="10.500" font-weight="700" fill="#fff" font-family="Open Sans">W</text></svg></div>
  <div class="slot run att"><svg width="22" height="23"><rect width="22" height="23" rx="3" fill="url(#gp)"/><path d="M0 19 10 9q1.500-1 3 0l9 10v1q0 3-3 3H3q-3 0-3-3z" fill="#1d8de0"/><path d="M0 18 10 8.500q1-.8 2.500 0L15 11 4 23H3q-3 0-3-3z" fill="#45d0f5"/><circle cx="16" cy="4.500" r="2" fill="#fff"/></svg></div>
  <div class="ms-auto d-flex align-items-center tray" style="padding-right:13px">
    <div class="slot" style="width:32px"><svg width="12" height="8"><path d="M1 6.500 6 1.500l5 5" fill="none" stroke="#fff" stroke-width="1.500"/></svg></div>
    <div class="slot" style="width:32px"><svg width="17" height="14"><path d="M4 12q-4 0-4-3t4-4q1-4 5-4t4.500 4Q17 6 17 9t-3 3z" fill="#8b8b8b"/><path d="M2 0l13 13" stroke="#292929" stroke-width="3"/><path d="M2.500 0l13 13" stroke="#ddd" stroke-width="1.200"/></svg></div>
    <div class="text-center lift" style="width:44px;letter-spacing:-.2px">ENG<br>IN</div>
    <div class="slot" style="width:30px"><svg width="17" height="13" fill="none" stroke="#fff" stroke-width="1.300"><path d="M1 5q7.500-7.500 15 0M3.500 7.500q5-5 10 0M6 10q2.500-2.500 5 0"/><circle cx="8.500" cy="11" r="1" fill="#fff"/></svg></div>
    <div class="slot" style="width:20px"><svg width="16" height="13" fill="none" stroke="#fff" stroke-width="1.200"><path d="M1 4.500h2.500L7 1.200v10.600L3.500 8.500H1zM10 4.500l4.500 4.500m0-4.500L10 9"/></svg></div>
    <div class="slot" style="width:28px"><svg width="17" height="12"><rect x=".8" y="1.300" width="13.400" height="9.400" rx="2.200" fill="none" stroke="#fff" stroke-width="1.400"/><path d="M3 3.500h4v5H3zM15 4h1.500v4H15z" fill="#fff"/></svg></div>
    <div class="text-end lift" style="width:73px">13:44<br>20-11-2024</div>
    <div class="slot" style="width:30px"><svg width="14" height="16"><path d="M2 11V6q0-5 5-5.500Q12 1 12 6v5l1.800 1.500H.2z" fill="#ff9c80"/><path d="M4.500 13.500h5q-.5 2-2.500 2t-2.500-2z" fill="#ff9c80"/></svg></div>
  </div>
</div>
<script src="https://cdn.jsdelivr.net/npm/bootstrap@5.3.0/dist/js/bootstrap.bundle.min.js"></script>
</body>
</html>
